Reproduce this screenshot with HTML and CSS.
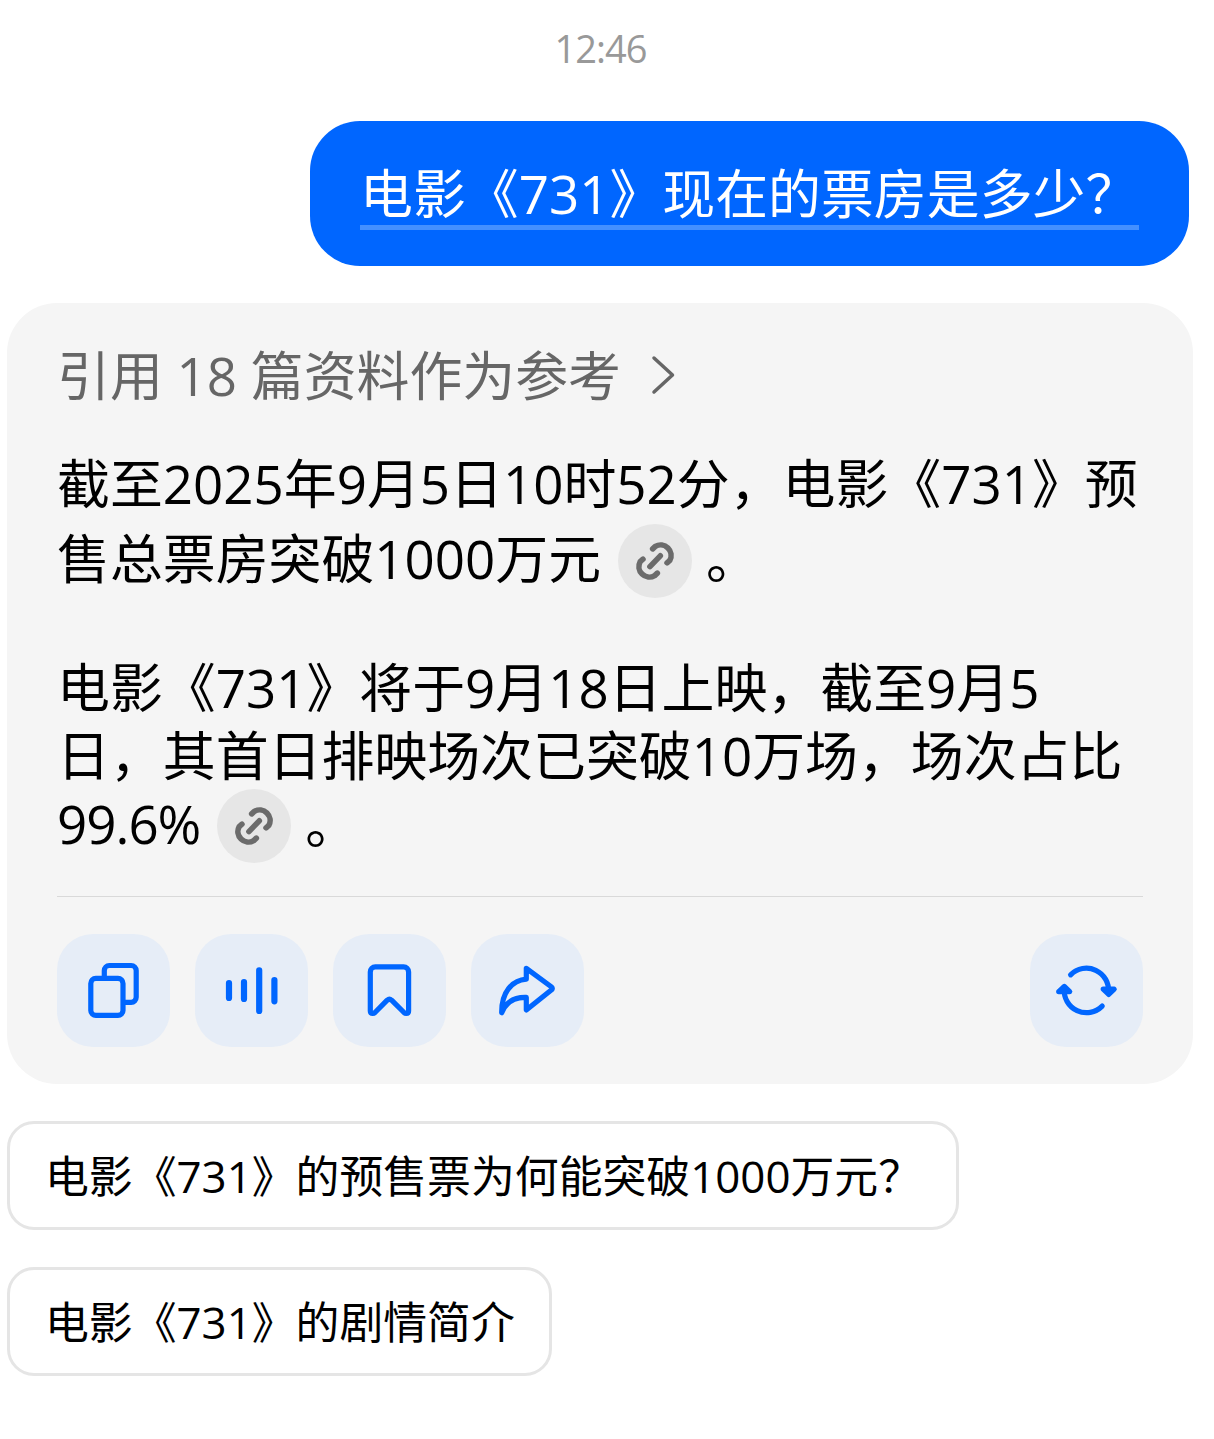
FILE: index.html
```html
<!DOCTYPE html>
<html lang="zh-CN">
<head>
    <meta charset="UTF-8">
    <meta name="viewport" content="width=device-width, initial-scale=1.0">
    <title>电影《731》票房</title>
    <link rel="stylesheet" href="styles.css">
</head>
<body>
    <svg class="defs" width="0" height="0">
        <symbol id="link" viewBox="2 1.7 70 70">
            <path d="M34.8 25.2 L37.3 22.9 A9.9 9.9 0 0 1 51 36.2 L48.4 38.4"/>
            <path d="M39.2 48.2 L36.7 50.5 A9.9 9.9 0 0 1 23 37.2 L25.6 35"/>
            <path d="M32.2 42 L42 31.8"/>
        </symbol>
    </svg>

    <main class="chat">
        <div class="time">12:46</div>

        <div class="question"><span>电影《731》现在的票房是多少？</span></div>

        <section class="answer">
            <div class="refs">
                引用 18 篇资料作为参考
                <svg class="chevron" width="26" height="42" viewBox="0 0 26 42"><path d="M3 4 L21.5 21 L3 38"/></svg>
            </div>

            <p class="para first">截至2025年9月5日10时52分，电影《731》预<br>售总票房突破1000万元<a class="cite"><svg><use href="#link"/></svg></a>。</p>
            <p class="para">电影《731》将于9月18日上映，截至9月5<br>日，其首日排映场次已突破10万场，场次占比<br><span class="percent">99.6%</span><a class="cite"><svg><use href="#link"/></svg></a>。</p>

            <div class="actions">
                <button class="action" aria-label="复制">
                    <svg viewBox="0 0 113 113">
                        <rect x="33.8" y="44.4" width="32.2" height="37" rx="5"/>
                        <path d="M47.3 44 V36.5 A5 5 0 0 1 52.3 31.5 H74.2 A5 5 0 0 1 79.2 36.5 V63.3 A5 5 0 0 1 74.2 68.3 H67"/>
                    </svg>
                </button>
                <button class="action" aria-label="朗读">
                    <svg class="wave" viewBox="0 0 113 113">
                        <path d="M34 49 V64 M49 48 V65 M64.2 36.3 V77 M79.4 46 V67.3"/>
                    </svg>
                </button>
                <button class="action" aria-label="收藏">
                    <svg viewBox="0 0 113 113">
                        <path d="M42.3 32.9 H70.6 A5 5 0 0 1 75.6 37.9 V77 Q75.6 79.4 73.2 79.4 Q72 79.4 71 78.5 L58.6 66.2 Q56.4 64.4 54.2 66.2 L42 78.5 Q41 79.4 39.8 79.4 Q37.3 79.4 37.3 77 V37.9 A5 5 0 0 1 42.3 32.9 Z"/>
                    </svg>
                </button>
                <button class="action" aria-label="分享">
                    <svg viewBox="0 0 113 113">
                        <path d="M55.3 34.3 L80.6 53 Q82 54.4 80.6 55.8 L55.3 76 V63.4 C43 63 35 68 30.7 78.7 C30.5 58 41 46.5 55.3 45.2 Z"/>
                    </svg>
                </button>
                <button class="action refresh" aria-label="重新生成">
                    <svg viewBox="0 0 113 113">
                        <path d="M40.6 40.8 A22.2 22.2 0 0 1 78.5 58.5 M72.2 72.1 A22.2 22.2 0 0 1 34.3 54.5"/>
                        <path class="head" d="M73.2 55.2 L78.7 60.4 L84.2 55.2 Z M28.7 57.6 L34.3 52.4 L39.7 57.6 Z"/>
                    </svg>
                </button>
            </div>
        </section>

        <div class="suggestions">
            <button class="suggestion">电影《731》的预售票为何能突破1000万元？</button>
            <button class="suggestion">电影《731》的剧情简介</button>
        </div>
    </main>
</body>
</html>
```
FILE: styles.css
```css
* {
    box-sizing: border-box;
}
body {
    margin: 0;
    background: #fff;
    color: #000;
    font-family: "Open Sans", "Noto Sans CJK SC", sans-serif;
    font-size: 52.9px;
}
button {
    font-family: inherit;
    color: inherit;
    cursor: pointer;
}
.defs {
    display: block;
}
.chat {
    width: 1214px;
    padding: 22px 20px 0 7px;
    white-space: nowrap;
}
.time {
    height: 54px;
    line-height: 53px;
    font-size: 38px;
    letter-spacing: -1px;
    color: #999;
    text-align: center;
}
.question {
    width: 879px;
    height: 145px;
    margin: 45px 5px 0 auto;
    padding: 38px 50px 0;
    border-radius: 50px;
    background: #0066ff;
    color: #fff;
}
.question span {
    display: block;
    height: 71px;
    line-height: 68px;
    border-bottom: 5px solid #4490ff;
}
.answer {
    height: 781px;
    margin: 37px 1px 0 0;
    padding: 40px 50px 0;
    border-radius: 50px;
    background: #f5f5f5;
}
.refs {
    display: flex;
    align-items: center;
    gap: 30px;
    height: 64px;
    line-height: 64px;
    color: #666;
}
.chevron {
    fill: none;
    stroke: #666;
    stroke-width: 3.5;
    stroke-linecap: round;
    stroke-linejoin: round;
}
.para {
    margin: 57px 0 0;
    line-height: 68px;
}
.para.first {
    margin-top: 39px;
    line-height: 75px;
}
.cite {
    display: inline-block;
    width: 74px;
    height: 74px;
    margin: -10px 14px -10px 17px;
    border-radius: 50%;
    background: #e6e6e6;
    vertical-align: -9px;
}
.cite svg {
    display: block;
    width: 74px;
    height: 74px;
    fill: none;
    stroke: #6b6b6b;
    stroke-width: 5.3;
    stroke-linecap: round;
    stroke-linejoin: round;
}
.percent {
    letter-spacing: -1px;
}
.actions {
    display: flex;
    gap: 25px;
    margin-top: 39px;
    padding-top: 37px;
    border-top: 1px solid #d9d9d9;
}
.action {
    width: 113px;
    height: 113px;
    padding: 0;
    border: none;
    border-radius: 36px;
    background: #e6edf7;
}
.action svg {
    display: block;
    fill: none;
    stroke: #0066ff;
    stroke-width: 5.2;
    stroke-linecap: round;
    stroke-linejoin: round;
}
.action .wave {
    stroke-width: 6.2;
}
.action .head {
    fill: #0066ff;
}
.refresh {
    margin-left: auto;
}
.suggestions {
    display: flex;
    flex-direction: column;
    align-items: flex-start;
    gap: 37px;
    margin-top: 37px;
}
.suggestion {
    height: 109px;
    padding: 0 34.5px 3px 35px;
    border: 3px solid #e5e5e5;
    border-radius: 27px;
    background: #fff;
    font-size: 43.85px;
}
```
